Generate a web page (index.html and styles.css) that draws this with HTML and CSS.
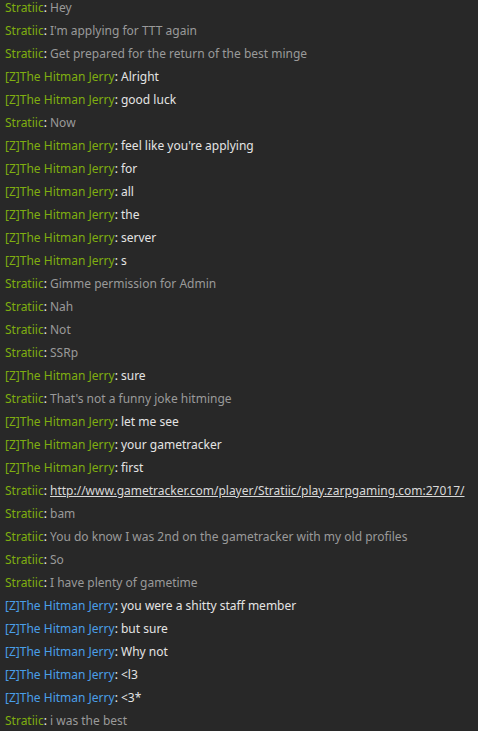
FILE: index.html
```html
<!DOCTYPE html>
<html lang="en">
<head>
    <meta charset="UTF-8">
    <meta name="viewport" content="width=device-width, initial-scale=1.0">
    <title>Chat log</title>
    <link rel="stylesheet" href="styles.css">
</head>
<body>
    <div class="chat">
        <div class="line"><span class="name">Stratiic</span><span class="colon">:</span> <span class="msg dim">Hey</span></div>
        <div class="line"><span class="name">Stratiic</span><span class="colon">:</span> <span class="msg dim">I'm applying for TTT again</span></div>
        <div class="line"><span class="name">Stratiic</span><span class="colon">:</span> <span class="msg dim">Get prepared for the return of the best minge</span></div>
        <div class="line"><span class="name">[Z]The Hitman Jerry</span><span class="colon">:</span> <span class="msg">Alright</span></div>
        <div class="line"><span class="name">[Z]The Hitman Jerry</span><span class="colon">:</span> <span class="msg">good luck</span></div>
        <div class="line"><span class="name">Stratiic</span><span class="colon">:</span> <span class="msg dim">Now</span></div>
        <div class="line"><span class="name">[Z]The Hitman Jerry</span><span class="colon">:</span> <span class="msg">feel like you're applying</span></div>
        <div class="line"><span class="name">[Z]The Hitman Jerry</span><span class="colon">:</span> <span class="msg">for</span></div>
        <div class="line"><span class="name">[Z]The Hitman Jerry</span><span class="colon">:</span> <span class="msg">all</span></div>
        <div class="line"><span class="name">[Z]The Hitman Jerry</span><span class="colon">:</span> <span class="msg">the</span></div>
        <div class="line"><span class="name">[Z]The Hitman Jerry</span><span class="colon">:</span> <span class="msg">server</span></div>
        <div class="line"><span class="name">[Z]The Hitman Jerry</span><span class="colon">:</span> <span class="msg">s</span></div>
        <div class="line"><span class="name">Stratiic</span><span class="colon">:</span> <span class="msg dim">Gimme permission for Admin</span></div>
        <div class="line"><span class="name">Stratiic</span><span class="colon">:</span> <span class="msg dim">Nah</span></div>
        <div class="line"><span class="name">Stratiic</span><span class="colon">:</span> <span class="msg dim">Not</span></div>
        <div class="line"><span class="name">Stratiic</span><span class="colon">:</span> <span class="msg dim">SSRp</span></div>
        <div class="line"><span class="name">[Z]The Hitman Jerry</span><span class="colon">:</span> <span class="msg">sure</span></div>
        <div class="line"><span class="name">Stratiic</span><span class="colon">:</span> <span class="msg dim">That's not a funny joke hitminge</span></div>
        <div class="line"><span class="name">[Z]The Hitman Jerry</span><span class="colon">:</span> <span class="msg">let me see</span></div>
        <div class="line"><span class="name">[Z]The Hitman Jerry</span><span class="colon">:</span> <span class="msg">your gametracker</span></div>
        <div class="line"><span class="name">[Z]The Hitman Jerry</span><span class="colon">:</span> <span class="msg">first</span></div>
        <div class="line"><span class="name">Stratiic</span><span class="colon">:</span> <a class="msg link" href="#">http://www.gametracker.com/player/Stratiic/play.zarpgaming.com:27017/</a></div>
        <div class="line"><span class="name">Stratiic</span><span class="colon">:</span> <span class="msg dim">bam</span></div>
        <div class="line"><span class="name">Stratiic</span><span class="colon">:</span> <span class="msg dim">You do know I was 2nd on the gametracker with my old profiles</span></div>
        <div class="line"><span class="name">Stratiic</span><span class="colon">:</span> <span class="msg dim">So</span></div>
        <div class="line"><span class="name">Stratiic</span><span class="colon">:</span> <span class="msg dim">I have plenty of gametime</span></div>
        <div class="line"><span class="name blue">[Z]The Hitman Jerry</span><span class="colon">:</span> <span class="msg">you were a shitty staff member</span></div>
        <div class="line"><span class="name blue">[Z]The Hitman Jerry</span><span class="colon">:</span> <span class="msg">but sure</span></div>
        <div class="line"><span class="name blue">[Z]The Hitman Jerry</span><span class="colon">:</span> <span class="msg">Why not</span></div>
        <div class="line"><span class="name blue">[Z]The Hitman Jerry</span><span class="colon">:</span> <span class="msg">&lt;l3</span></div>
        <div class="line"><span class="name blue">[Z]The Hitman Jerry</span><span class="colon">:</span> <span class="msg">&lt;3*</span></div>
        <div class="line"><span class="name">Stratiic</span><span class="colon">:</span> <span class="msg dim">i was the best</span></div>
    </div>
</body>
</html>
```

FILE: styles.css
```css
body {
    margin: 0;
    background: #282828;
    font-family: "Noto Sans", "Open Sans", sans-serif;
    font-size: 12px;
    overflow: hidden;
}

.chat {
    margin-top: -4px;
    padding-left: 5px;
}

.line {
    height: 23px;
    line-height: 23px;
    white-space: nowrap;
}

.name {
    color: #7fae10;
}

.name.blue {
    color: #4a9fe8;
}

.colon {
    color: #f0f0f0;
}

.msg {
    color: #e4e4e4;
}

.msg.dim {
    color: #9a9a9a;
}

.link {
    color: #d8d8d8;
    text-decoration: underline;
}
```
